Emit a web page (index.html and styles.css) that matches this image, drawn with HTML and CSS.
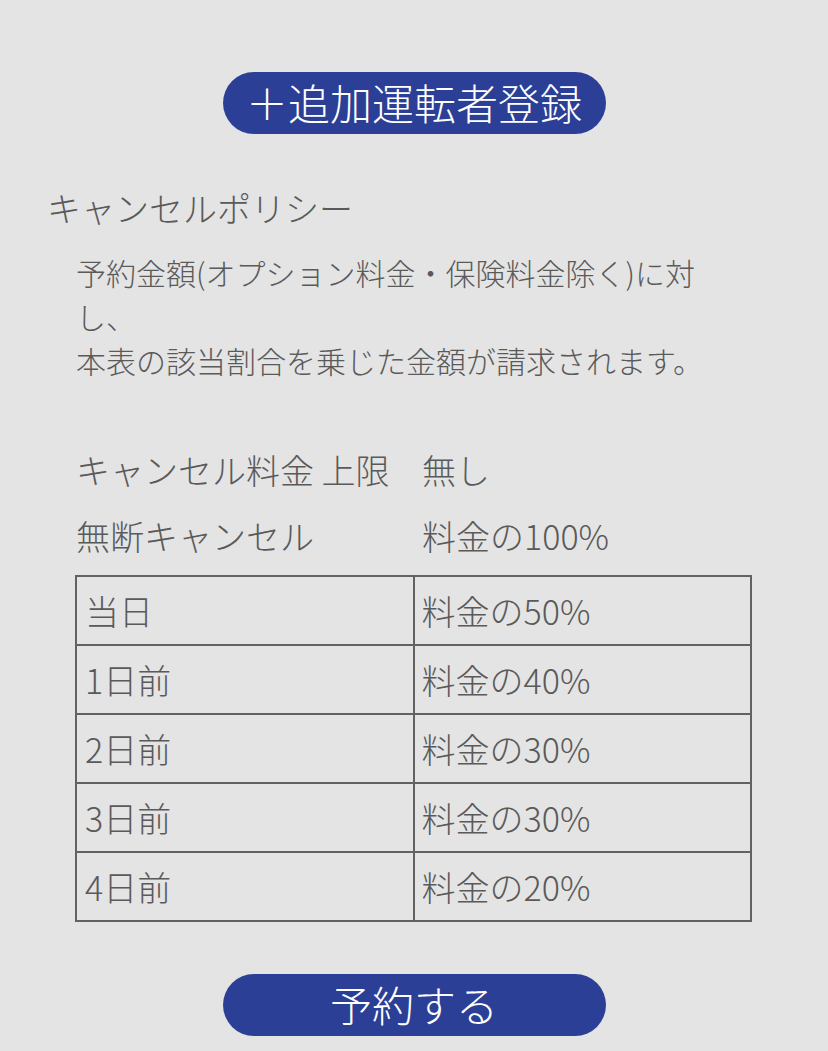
FILE: index.html
```html
<!DOCTYPE html>
<html lang="ja">

<head>
    <meta charset="UTF-8">
    <meta name="viewport" content="width=device-width, initial-scale=1.0">
    <title>キャンセルポリシー</title>
    <link rel="stylesheet" href="styles.css">
</head>

<body>
    <div class="page">
        <button class="btn" type="button">＋追加運転者登録</button>

        <h2 class="policy-title">キャンセルポリシー</h2>
        <p class="policy-text">
            予約金額(オプション料金・保険料金除く)に対し、<br>
            本表の該当割合を乗じた金額が請求されます。
        </p>

        <div class="policy-rows">
            <div class="row-label">キャンセル料金 上限</div>
            <div class="row-value">無し</div>
            <div class="row-label">無断キャンセル</div>
            <div class="row-value">料金の100%</div>
        </div>

        <table class="fee-table">
            <tbody>
                <tr>
                    <td>当日</td>
                    <td>料金の50%</td>
                </tr>
                <tr>
                    <td>1日前</td>
                    <td>料金の40%</td>
                </tr>
                <tr>
                    <td>2日前</td>
                    <td>料金の30%</td>
                </tr>
                <tr>
                    <td>3日前</td>
                    <td>料金の30%</td>
                </tr>
                <tr>
                    <td>4日前</td>
                    <td>料金の20%</td>
                </tr>
            </tbody>
        </table>

        <button class="btn btn-submit" type="button">予約する</button>
    </div>
</body>

</html>
```

FILE: styles.css
```css
body {
    font-family: 'Noto Sans CJK JP', 'Noto Sans', sans-serif;
    font-weight: 300;
    margin: 0;
    background-color: #e4e4e4;
    color: #5a5a5a;
}

.page {
    padding: 72px 0 0;
}

.btn {
    display: block;
    width: 383px;
    height: 62px;
    margin: 0 auto;
    padding: 0 0 3px;
    border: none;
    border-radius: 31px;
    background-color: #2b3f96;
    color: #fff;
    font-family: inherit;
    font-weight: 300;
    font-size: 42px;
    line-height: 59px;
}

.policy-title {
    margin: 52px 0 0 47px;
    font-size: 34px;
    font-weight: 300;
    line-height: 44px;
}

.policy-text {
    width: 632px;
    margin: 20px 0 0 76px;
    font-size: 30px;
    line-height: 44px;
}

.policy-rows {
    display: grid;
    grid-template-columns: 346px 1fr;
    margin: 55px 0 0 76px;
    font-size: 34px;
    line-height: 66px;
}

.fee-table {
    width: 677px;
    margin: 6px 0 0 75px;
    border-collapse: collapse;
    font-size: 34px;
}

.fee-table td {
    width: 50%;
    height: 67px;
    padding: 0 8px;
    border: 2px solid #626262;
    line-height: 1;
}

.fee-table td:first-child {
    width: 323px;
    padding-left: 8px;
}

.fee-table td:last-child {
    padding-left: 7px;
}

.btn-submit {
    margin-top: 52px;
}
```
